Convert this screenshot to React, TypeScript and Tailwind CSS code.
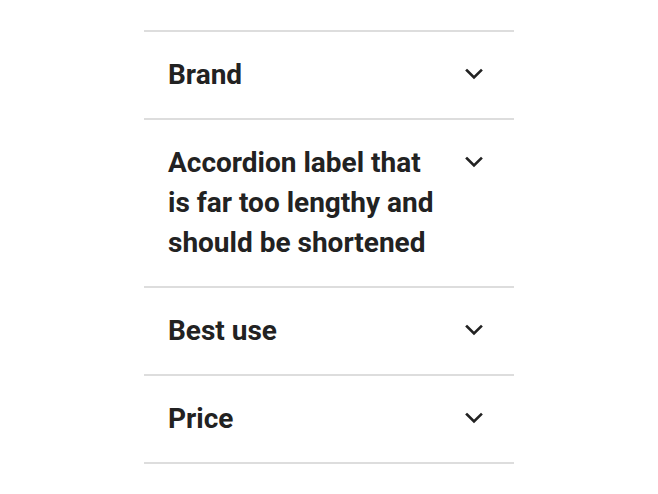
import React from "react";

const items = [
  "Brand",
  "Accordion label that is far too lengthy and should be shortened",
  "Best use",
  "Price",
];

function Chevron() {
  return (
    <svg width="24" height="24" viewBox="0 0 24 24" className="mt-2 shrink-0" fill="none">
      <path d="M5 7.5L12 14.5L19 7.5" stroke="#222222" strokeWidth="2.6" strokeLinecap="square" strokeLinejoin="miter" />
    </svg>
  );
}

export default function App() {
  return (
    <div className="min-h-[494px] w-full bg-white pt-[30px]" style={{ fontFamily: "Roboto, 'Liberation Sans', sans-serif" }}>
      <div className="mx-auto w-[370px] border-t-2 border-[#dddddd]">
        {items.map((label) => (
          <div key={label} className="flex items-start gap-4 border-b-2 border-[#dddddd] py-[23px] pl-6 pr-7">
            <div className="flex-1 text-[28px] font-bold leading-[40px] text-[#222222]">{label}</div>
            <Chevron />
          </div>
        ))}
      </div>
    </div>
  );
}
